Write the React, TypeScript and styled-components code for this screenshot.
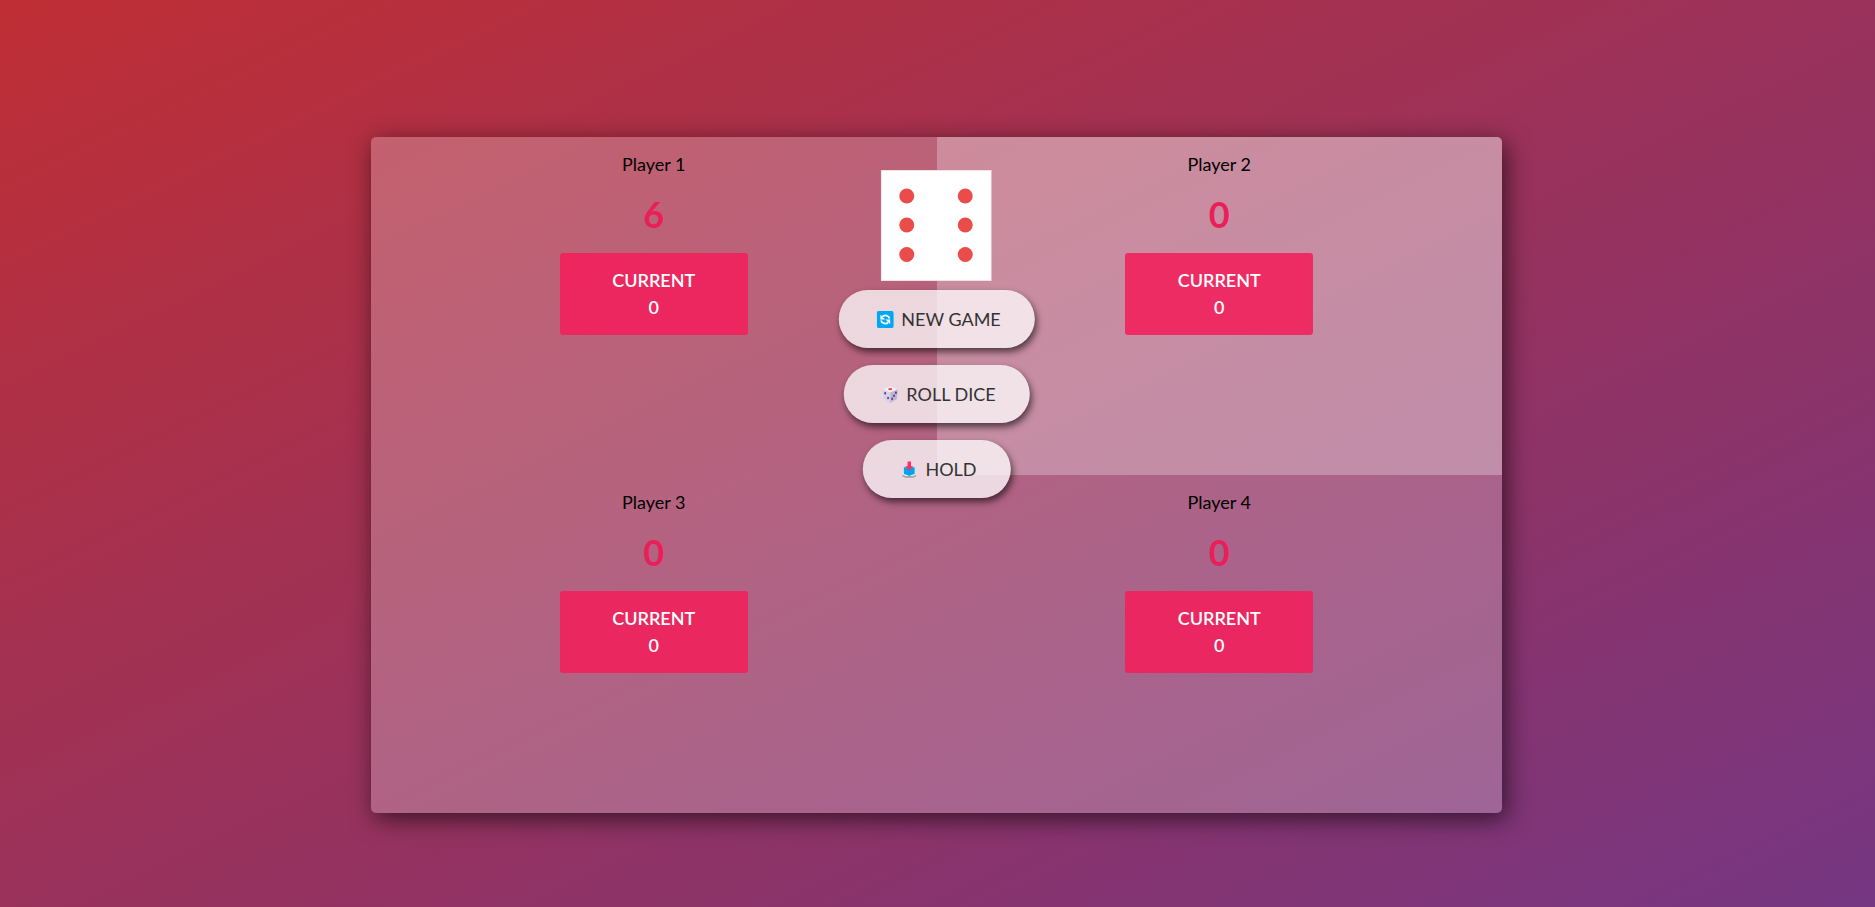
import React, { useState } from "react";
import styled, { createGlobalStyle } from "styled-components";

const GlobalStyle = createGlobalStyle`
  *, *::before, *::after { box-sizing: border-box; }
  body {
    margin: 0;
    font-family: Lato, "Liberation Sans", sans-serif;
    font-size: 18px;
    color: #000;
  }
`;

const Page = styled.div`
  min-height: 100vh;
  display: grid;
  grid-template-columns: 371fr 1131fr 373fr;
  align-items: start;
  padding: 137px 0 94px;
  background-image: linear-gradient(to top left, #753682 0%, #bf2e34 100%);
`;

const Board = styled.main`
  position: relative;
  grid-column: 2;
  display: grid;
  grid-template-columns: 1fr 1fr;
  grid-auto-rows: minmax(338px, auto);
  border-radius: 5px;
  background-color: rgba(255, 255, 255, 0.24);
  box-shadow: 4px 6px 25px rgba(0, 0, 0, 0.62);
`;

const Panel = styled.section<{ $active: boolean }>`
  display: flex;
  flex-direction: column;
  align-items: center;
  padding-top: 15px;
  border-top-right-radius: ${(p) => (p.$active ? 5 : 0)}px;
  background-color: ${(p) => (p.$active ? "rgba(255, 255, 255, 0.27)" : "transparent")};
`;

const Name = styled.h2`
  margin: 0;
  font-size: 18px;
  line-height: 24px;
  font-weight: 400;
`;

const Score = styled.p`
  margin: 16px 0;
  font-size: 36px;
  line-height: 45px;
  font-weight: 700;
  color: #e91f5a;
`;

const Current = styled.div`
  width: 188px;
  padding: 14px 0;
  border-radius: 3px;
  background-color: rgba(243, 30, 91, 0.87);
  color: #fff;
  text-align: center;
  font-weight: 600;
  line-height: 27px;
`;

const CurrentLine = styled.p`
  margin: 0;
`;

const Controls = styled.div`
  position: absolute;
  top: 33px;
  left: 50%;
  transform: translateX(-50%);
  display: flex;
  flex-direction: column;
  align-items: center;
  gap: 17px;
`;

const DieFace = styled.svg`
  display: block;
  width: 111px;
  height: 111px;
  margin-bottom: -8px;
`;

const Action = styled.button`
  display: flex;
  align-items: center;
  gap: 8px;
  height: 58px;
  padding: 0 34px 0 38px;
  border: none;
  border-radius: 30px;
  background-color: rgba(255, 255, 255, 0.75);
  box-shadow: 2px 4px 7px rgba(0, 0, 0, 0.6);
  color: #333;
  font-family: inherit;
  font-size: 18px;
  white-space: nowrap;
  cursor: pointer;
`;

const Icon = styled.svg`
  display: block;
  width: 17px;
  height: 17px;
`;

const RefreshIcon = () => (
  <Icon viewBox="0 0 18 18" aria-hidden="true">
    <rect width="18" height="18" rx="2" fill="#00a8f3" />
    <path d="M6 6C8 3.800 12.500 4.500 13.500 8" fill="none" stroke="#fff" strokeWidth="1.9" />
    <path d="M3.800 4v5h5z" fill="#fff" />
    <path d="M12 12C10 14.200 5.500 13.500 4.500 10" fill="none" stroke="#fff" strokeWidth="1.9" />
    <path d="M14.200 14V9H9.200z" fill="#fff" />
  </Icon>
);

const DiceIcon = () => (
  <Icon viewBox="0 0 18 18" aria-hidden="true">
    <path d="M9 .5 17 3.500 9 7 1 3.500z" fill="#f3eff8" />
    <path d="M1 3.500 9 7v11L2 13.800z" fill="#d8d1e8" />
    <path d="M17 3.500 9 7v11l7-4.200z" fill="#beb4d6" />
    <ellipse cx="9" cy="3.400" rx="2.200" ry="1.200" fill="#f34848" />
    <g fill="#51427f">
      <ellipse cx="3.600" cy="7.600" rx="1" ry="1.300" />
      <ellipse cx="6.700" cy="12.800" rx="1" ry="1.300" />
      <ellipse cx="15" cy="7.200" rx="1" ry="1.300" />
      <ellipse cx="13" cy="10.300" rx="1" ry="1.300" />
      <ellipse cx="11" cy="13.400" rx="1" ry="1.300" />
    </g>
  </Icon>
);

const HoldIcon = () => (
  <Icon viewBox="0 0 18 18" aria-hidden="true">
    <path d="M3.500 11 1.800 14.500v2L5 17.800h8l3.200-1.300v-2L14.500 11z" fill="#a3a3a8" />
    <path d="M3.500 10 1.800 14.300 5 16h8l3.200-1.700L14.500 10z" fill="#f1f1f3" />
    <path d="M3.300 6.500h11.400v7.300L12 14.500 9 16 6 14.500 3.300 13.800z" fill="#00a5ef" />
    <path d="M7.200 .5h3.600v5h2.400L9 10.200 4.800 5.500h2.400z" fill="#fa2f65" />
  </Icon>
);

const PIP_ROWS = [26, 55, 84.5];

const Die = () => (
  <DieFace viewBox="0 0 111 111" role="img" aria-label="Die showing six">
    <rect width="111" height="111" fill="#f4dfe4" />
    <rect x="1" y="1" width="109" height="109" fill="#fff" />
    {PIP_ROWS.map((y) => (
      <g key={y} fill="#ea4c4a">
        <circle cx="26" cy={y} r="7.500" />
        <circle cx="84.500" cy={y} r="7.500" />
      </g>
    ))}
  </DieFace>
);

export default function App() {
  const [scores, setScores] = useState([6, 0, 0, 0]);
  const [active, setActive] = useState(1);

  const restart = () => {
    setScores([0, 0, 0, 0]);
    setActive(0);
  };

  return (
    <>
      <GlobalStyle />
      <Page>
        <Board>
          {scores.map((score, i) => (
            <Panel key={i} $active={i === active}>
              <Name>Player {i + 1}</Name>
              <Score>{score}</Score>
              <Current>
                <CurrentLine>CURRENT</CurrentLine>
                <CurrentLine>0</CurrentLine>
              </Current>
            </Panel>
          ))}
          <Controls>
            <Die />
            <Action type="button" onClick={restart}>
              <RefreshIcon />
              NEW GAME
            </Action>
            <Action type="button">
              <DiceIcon />
              ROLL DICE
            </Action>
            <Action type="button" onClick={() => setActive((active + 1) % 4)}>
              <HoldIcon />
              HOLD
            </Action>
          </Controls>
        </Board>
      </Page>
    </>
  );
}
